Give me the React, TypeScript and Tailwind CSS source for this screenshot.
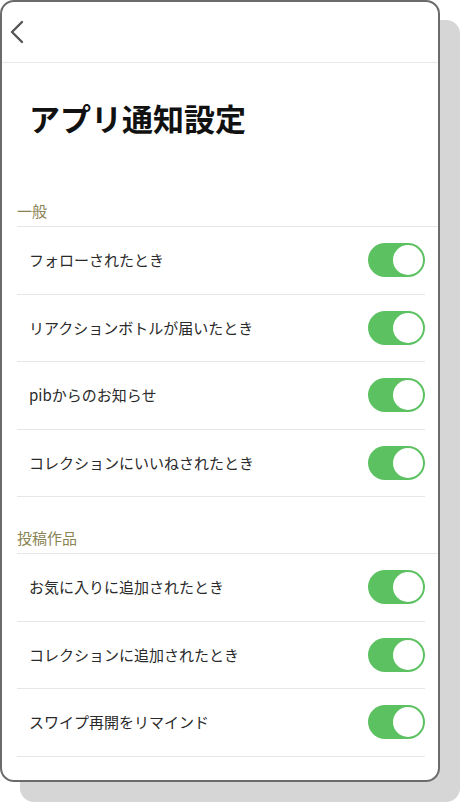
import { useState } from "react"

type Item = { label: string; on: boolean }

const sections: { title: string; items: Item[] }[] = [
  {
    title: "一般",
    items: [
      { label: "フォローされたとき", on: true },
      { label: "リアクションボトルが届いたとき", on: true },
      { label: "pibからのお知らせ", on: true },
      { label: "コレクションにいいねされたとき", on: true },
    ],
  },
  {
    title: "投稿作品",
    items: [
      { label: "お気に入りに追加されたとき", on: true },
      { label: "コレクションに追加されたとき", on: true },
      { label: "スワイプ再開をリマインド", on: true },
    ],
  },
]

function Toggle({ on, onChange }: { on: boolean; onChange: () => void }) {
  return (
    <button
      type="button"
      onClick={onChange}
      className={`flex h-[34px] w-[57px] shrink-0 items-center rounded-full p-[2px] ${
        on ? "justify-end bg-[#5cc160]" : "justify-start bg-[#e2e2e2]"
      }`}
    >
      <span className="block h-[30px] w-[30px] rounded-full bg-white" />
    </button>
  )
}

function Row({ item }: { item: Item }) {
  const [on, setOn] = useState(item.on)
  return (
    <div className="mr-[13px] ml-[15px] flex h-[67.5px] items-center justify-between border-b border-[#e6e6e6] pl-[12px]">
      <span className="text-[15px] text-[#2a2a2a]">{item.label}</span>
      <Toggle on={on} onChange={() => setOn(!on)} />
    </div>
  )
}

export default function App() {
  return (
    <div
      className="min-h-[803px] bg-white"
      style={{ fontFamily: '"Noto Sans CJK JP", "Noto Sans", sans-serif' }}
    >
      <div className="h-[782px] w-[440px] overflow-hidden rounded-[14px] border-2 border-[#6b6b6b] bg-white shadow-[20px_20px_0_0_#d6d6d6]">
        <div className="flex h-[61px] items-center border-b border-[#e8e8e8] pl-[7px]">
          <svg width="16" height="24" viewBox="0 0 16 24" fill="none">
            <polyline
              points="13,2 3,12 13,22"
              stroke="#555555"
              strokeWidth="2.4"
              strokeLinecap="round"
              strokeLinejoin="round"
            />
          </svg>
        </div>

        <h1 className="pt-[33px] pl-[27px] text-[31px] leading-[43px] font-bold text-[#111111]">
          アプリ通知設定
        </h1>

        {sections.map((s, i) => (
          <div key={s.title} className={i === 0 ? "mt-[61px]" : "mt-[30px]"}>
            <div className="ml-[15px] border-b border-[#e6e6e6] pb-[4px] text-[15px] leading-[22px] text-[#8a8354]">
              {s.title}
            </div>
            {s.items.map((item) => (
              <Row key={item.label} item={item} />
            ))}
          </div>
        ))}
      </div>
    </div>
  )
}
